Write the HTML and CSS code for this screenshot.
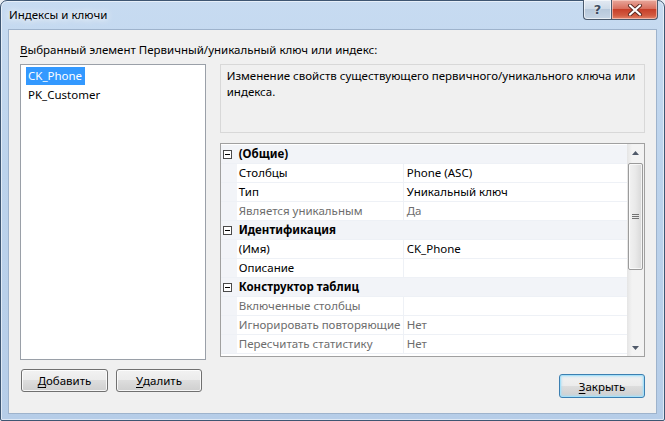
FILE: index.html
```html
<!DOCTYPE html>
<html lang="ru">
<head>
<meta charset="utf-8">
<title>Индексы и ключи</title>
<link rel="stylesheet" href="styles.css">
</head>
<body>
<div class="window">
  <div class="titlebar">
    <span class="title">Индексы и ключи</span>
    <div class="caption-btns">
      <div class="cbtn help">?</div>
      <div class="cbtn close">
        <svg width="16" height="12" viewBox="0 0 16 12">
          <path d="M3 1.5 L13 10.5 M13 1.5 L3 10.5" stroke="#5a2a22" stroke-width="4" stroke-linecap="round"/>
          <path d="M3 1.5 L13 10.5 M13 1.5 L3 10.5" stroke="#ffffff" stroke-width="2.2" stroke-linecap="round"/>
        </svg>
      </div>
    </div>
  </div>
  <div class="client">
    <div class="label"><u>В</u>ыбранный элемент Первичный/уникальный ключ или индекс:</div>
    <div class="main">
      <div class="list">
        <div class="item"><span class="sel">CK_Phone</span></div>
        <div class="item"><span>PK_Customer</span></div>
      </div>
      <div class="right">
        <div class="desc">Изменение свойств существующего первичного/уникального ключа или индекса.</div>
        <div class="grid">
          <div class="rows">
            <div class="row cat"><span class="exp"></span><span class="cname">(Общие)</span></div>
            <div class="row"><span class="gut"></span><span class="name">Столбцы</span><span class="val">Phone (ASC)</span></div>
            <div class="row"><span class="gut"></span><span class="name">Тип</span><span class="val">Уникальный ключ</span></div>
            <div class="row dis"><span class="gut"></span><span class="name">Является уникальным</span><span class="val">Да</span></div>
            <div class="row cat"><span class="exp"></span><span class="cname">Идентификация</span></div>
            <div class="row"><span class="gut"></span><span class="name">(Имя)</span><span class="val">CK_Phone</span></div>
            <div class="row"><span class="gut"></span><span class="name">Описание</span><span class="val"></span></div>
            <div class="row cat"><span class="exp"></span><span class="cname">Конструктор таблиц</span></div>
            <div class="row dis"><span class="gut"></span><span class="name">Включенные столбцы</span><span class="val"></span></div>
            <div class="row dis"><span class="gut"></span><span class="name">Игнорировать повторяющие</span><span class="val">Нет</span></div>
            <div class="row dis"><span class="gut"></span><span class="name">Пересчитать статистику</span><span class="val">Нет</span></div>
          </div>
          <div class="scrollbar">
            <div class="arrow up"><svg width="7" height="4" viewBox="0 0 7 4"><path d="M0 4 L3.5 0 L7 4 Z" fill="#505a6a"/></svg></div>
            <div class="track">
              <div class="thumb"><span class="grip"></span></div>
            </div>
            <div class="arrow down"><svg width="7" height="4" viewBox="0 0 7 4"><path d="M0 0 L3.5 4 L7 0 Z" fill="#505a6a"/></svg></div>
          </div>
        </div>
      </div>
    </div>
    <div class="bottom">
      <div class="left-btns">
        <div class="btn add"><u>Д</u>обавить</div>
        <div class="btn del"><u>У</u>далить</div>
      </div>
      <div class="btn default"><u>З</u>акрыть</div>
    </div>
  </div>
</div>
</body>
</html>
```
FILE: styles.css
```css
* { box-sizing: border-box; }
html, body { margin: 0; padding: 0; }
body {
  width: 665px;
  height: 421px;
  background: #e9eef3;
  font-family: "Noto Sans", "Open Sans", sans-serif;
  font-size: 11.5px;
  color: #000;
  overflow: hidden;
}
.window {
  width: 665px;
  height: 421px;
  border: 1px solid #3e5672;
  border-radius: 7px 7px 2px 2px;
  background: linear-gradient(180deg, #c7dbf1 0%, #bcd3ec 40%, #b6cde8 100%);
  padding: 0 7px 6px 7px;
  display: flex;
  flex-direction: column;
  box-shadow: inset 0 0 0 1px rgba(255,255,255,0.55);
}
.titlebar {
  height: 28px;
  display: flex;
  justify-content: space-between;
  align-items: flex-start;
}
.title {
  margin-top: 6px;
  margin-left: 1px;
  font-size: 11.5px;
  line-height: 15px;
  text-shadow: 0 0 6px #fff, 0 0 10px #fff;
}
.caption-btns {
  display: flex;
  margin-top: -1px;
  margin-right: -1px;
}
.cbtn {
  height: 20px;
  border: 1px solid #4b5a6d;
  border-top: none;
  display: flex;
  align-items: center;
  justify-content: center;
}
.help {
  width: 28px;
  border-radius: 0 0 0 4px;
  border-right: none;
  background: linear-gradient(180deg, #e3eaf3 0%, #cfdbe8 45%, #b7c8db 50%, #c6d5e5 100%);
  color: #3d4c60;
  font-family: "DejaVu Sans", sans-serif;
  font-size: 13px;
  font-weight: bold;
  text-shadow: 0 0 2px #fff;
  box-shadow: inset 0 0 0 1px rgba(255,255,255,0.6);
}
.close {
  width: 47px;
  border-radius: 0 0 4px 0;
  background: linear-gradient(180deg, #e8a89c 0%, #d9705f 45%, #c7402a 50%, #d25a3f 80%, #e2836a 100%);
  box-shadow: inset 0 0 0 1px rgba(255,220,210,0.6);
}
.client {
  flex: 1;
  background: #f0f0f0;
  border: 1px solid #9eb3cc;
  padding: 12px 11px 0 11px;
  display: flex;
  flex-direction: column;
}
u { text-decoration: underline; text-underline-offset: 2px; }
.label {
  line-height: 15px;
  height: 15px;
  white-space: nowrap;
}
.main {
  margin-top: 7px;
  display: flex;
  gap: 14px;
  height: 296px;
}
.list {
  width: 186px;
  height: 296px;
  background: #fff;
  border: 1px solid #9aa0a8;
  padding: 2px 0 0 5px;
}
.item {
  height: 19px;
  line-height: 18px;
}
.item span {
  display: inline-block;
  padding: 0 3px 0 2px;
  height: 18px;
}
.item .sel {
  background: #3399ff;
  color: #fff;
}
.right {
  width: 426px;
  display: flex;
  flex-direction: column;
}
.desc {
  height: 69px;
  border: 1px solid #d8d8d8;
  background: #f0f0f0;
  padding: 3px 6px;
  line-height: 16px;
}
.grid {
  margin-top: 10px;
  height: 214px;
  border: 1px solid #a0a0a0;
  background: #fff;
  display: flex;
}
.rows {
  flex: 1;
  display: flex;
  flex-direction: column;
  padding-top: 1px;
}
.row {
  height: 19px;
  display: flex;
  align-items: stretch;
  border-bottom: 1px solid #eef1f6;
  line-height: 18px;
  white-space: nowrap;
}
.row.cat {
  background: #f2f4f8;
  font-weight: bold;
  align-items: center;
}
.exp {
  width: 9px;
  height: 9px;
  border: 1px solid #4a4a4a;
  margin: 0 7px 0 2px;
  position: relative;
  background: #fff;
}
.exp::after {
  content: "";
  position: absolute;
  left: 1px;
  right: 1px;
  top: 3px;
  height: 1px;
  background: #000;
}
.cname { line-height: 18px; }
.gut {
  width: 16px;
  background: #f2f4f8;
}
.name {
  width: 167px;
  padding-left: 2px;
  border-right: 1px solid #eef1f6;
  overflow: hidden;
}
.val {
  flex: 1;
  padding-left: 3px;
}
.row.dis { color: #6d6d6d; }
.scrollbar {
  width: 17px;
  display: flex;
  flex-direction: column;
  background: linear-gradient(90deg, #e5e5e5 0%, #f3f3f3 30%, #f3f3f3 100%);
}
.arrow {
  height: 17px;
  display: flex;
  align-items: center;
  justify-content: center;
}
.track {
  flex: 1;
  padding-top: 2px;
}
.thumb {
  margin: 0 1px;
  height: 107px;
  border: 1px solid #9b9b9b;
  border-radius: 2px;
  background: linear-gradient(90deg, #f2f2f2 0%, #e9e9e9 50%, #d8d8d8 100%);
  box-shadow: inset 0 0 0 1px rgba(255,255,255,0.7);
  display: flex;
  align-items: center;
  justify-content: center;
}
.grip {
  width: 7px;
  height: 5px;
  border-top: 1px solid #727272;
  border-bottom: 1px solid #727272;
  background: linear-gradient(180deg, transparent 1px, #727272 1px, #727272 2px, transparent 2px);
}
.bottom {
  margin-top: 9px;
  display: flex;
  justify-content: space-between;
  align-items: flex-start;
}
.left-btns {
  display: flex;
  gap: 8px;
  margin-left: 1px;
}
.btn {
  height: 23px;
  border: 1px solid #707070;
  border-radius: 3px;
  background: linear-gradient(180deg, #f2f2f2 0%, #ebebeb 50%, #dddddd 50%, #cfcfcf 100%);
  box-shadow: inset 0 0 0 1px rgba(255,255,255,0.8);
  display: flex;
  align-items: center;
  justify-content: center;
  line-height: 15px;
}
.add { width: 87px; }
.del { width: 86px; }
.default {
  width: 86px;
  height: 24px;
  margin-top: 5px;
  border-color: #3c7fb1;
  box-shadow: inset 0 0 0 1px #a6e0f8, inset 0 0 2px 2px rgba(170,220,245,0.6);
}
```
